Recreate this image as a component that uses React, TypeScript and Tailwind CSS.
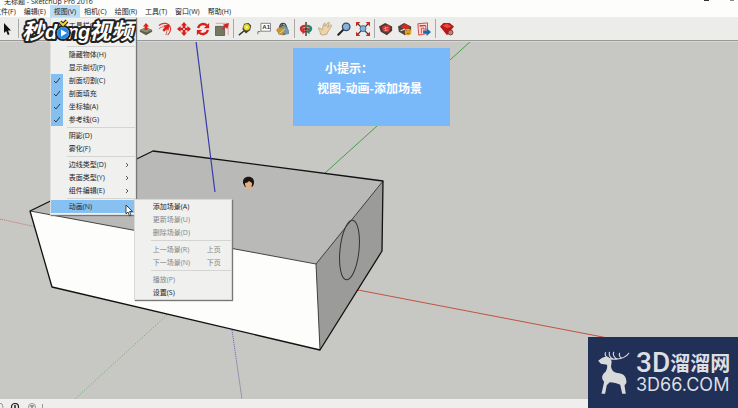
import React from 'react';
import clsx from 'clsx';

type MenuEntry = {
  label: string;
  checked?: boolean;
  arrow?: boolean;
  disabled?: boolean;
  hint?: string;
};

const menus = ['文件(F)', '编辑(E)', '视图(V)', '相机(C)', '绘图(R)', '工具(T)', '窗口(W)', '帮助(H)'];

const animationMenu: MenuEntry[][] = [
  [{ label: '添加场景(A)' }, { label: '更新场景(U)', disabled: true }, { label: '删除场景(D)', disabled: true }],
  [
    { label: '上一场景(R)', disabled: true, hint: '上页' },
    { label: '下一场景(N)', disabled: true, hint: '下页' },
  ],
  [{ label: '播放(P)', disabled: true }, { label: '设置(S)' }],
];

const viewMenu: MenuEntry[][] = [
  [
    { label: '隐藏物体(H)' },
    { label: '显示剖切(P)' },
    { label: '剖面切割(C)', checked: true },
    { label: '剖面填充', checked: true },
    { label: '坐标轴(A)', checked: true },
    { label: '参考线(G)', checked: true },
  ],
  [{ label: '阴影(D)' }, { label: '雾化(F)' }],
  [
    { label: '边线类型(D)', arrow: true },
    { label: '表面类型(Y)', arrow: true },
    { label: '组件编辑(E)', arrow: true },
  ],
];

const Svg = ({ children }: { children: React.ReactNode }) => (
  <svg viewBox="0 0 16 16" className="h-3.5 w-3.5" fill="none" aria-hidden="true">
    {children}
  </svg>
);

const toolGroups: { name: string; icon: React.ReactNode }[][] = [
  [
    {
      name: '推/拉',
      icon: (
        <Svg>
          <path d="M1 9 8 6l7 3v2l-7 4-7-4z" fill="#5f5e49" />
          <path d="m1 9 7-3 7 3-7 3z" fill="#8d8b70" />
          <path d="M6.500 9V5H4.500L8 1l3.500 4h-2v4z" fill="#e0201b" />
        </Svg>
      ),
    },
    {
      name: '路径跟随',
      icon: (
        <Svg>
          <path d="M1 4c5-4 11-3 13 2 1 3 0 6-3 9" stroke="#e5322c" strokeWidth="1.300" />
          <path d="M1 8c3-3 6-3 8-1 2 2 1 5 0 8" stroke="#a55a55" />
          <path d="m5 9 3-3-2-2 7-1-1 7-2-2-3 3z" fill="#dc1e1a" />
        </Svg>
      ),
    },
    {
      name: '移动',
      icon: (
        <Svg>
          <path d="m8 0 3.500 4H9.500v2.500H12V4.500L16 8l-4 3.500v-2H9.500V12h2L8 16l-3.500-4h2V9.500H4v2L0 8l4-3.500v2h2.500V4h-2z" fill="#d91f1b" />
          <path d="M7 7h2v2H7z" fill="#f5d5d3" />
        </Svg>
      ),
    },
    {
      name: '旋转',
      icon: (
        <Svg>
          <path d="M2.500 7c1-5 7-6 10-3M13.500 9c-1 5-7 6-10 3" stroke="#dc1f1b" strokeWidth="2.600" />
          <path d="M15 1v6H9zM1 15V9h6z" fill="#dc1f1b" />
        </Svg>
      ),
    },
    {
      name: '缩放',
      icon: (
        <Svg>
          <path d="M1 1.500h14V15" stroke="#e99590" />
          <path d="M.5 5h10.500v10.500H.5z" fill="#77765f" stroke="#5b5a48" />
          <path d="m8 8 3-3-2-2 7-2-2 7-2-2-3 3z" fill="#dc1f1b" />
        </Svg>
      ),
    },
  ],
  [
    {
      name: '卷尺工具',
      icon: (
        <Svg>
          <path d="m1 15 6-5" stroke="#333" strokeWidth="1.600" />
          <path d="M5 8 7 2l5-1 3 3-1 5-5 4z" fill="#3d3c25" />
          <circle cx="10" cy="6" r="3.600" fill="#e5d928" />
          <circle cx="10" cy="6" r="1.300" fill="#fbf7b3" />
        </Svg>
      ),
    },
    {
      name: '文字',
      icon: (
        <Svg>
          <path d="M4.500 1.500h11v9h-11z" fill="#fff" stroke="#777" />
          <path d="M4 11H1v3" stroke="#666" />
          <text x="6" y="8.500" fontSize="7" fontFamily="Liberation Sans" fontWeight="700" fill="#333">
            A1
          </text>
        </Svg>
      ),
    },
    {
      name: '材质',
      icon: (
        <Svg>
          <path d="m1 9 6-7 6 4 2 7-7 2-5-1z" fill="#55574e" />
          <path d="m6 5 5-1 4 6-1 4-4 0z" fill="#729aad" />
          <path d="M0 10c2-5 6-5 10-1l-2 6-5-1-1-3z" fill="#c49439" />
          <path d="M4 6c1-6 7-6 8 0" stroke="#41443c" strokeWidth="1.300" />
          <path d="m4 13 6-5" stroke="#eee3ac" />
        </Svg>
      ),
    },
  ],
  [
    {
      name: '环绕观察',
      icon: (
        <Svg>
          <path d="M7 3C0 3-1 9 4 12v2l4-3-4-4v2C3 8 4 6 7 6z" fill="#cf2c2b" />
          <path d="M9 3c7 0 8 6 3 9v2l-4-3 4-4v2c1-1 0-3-3-3z" fill="#30836a" />
          <path d="M4 8h8" stroke="#b7302b" strokeWidth="2" />
          <path d="M8 0v16" stroke="#263d31" strokeWidth="1.600" />
        </Svg>
      ),
    },
    {
      name: '平移',
      icon: (
        <Svg>
          <path
            d="M3 14 2 10 0 7l2 0 3 2 1-6 2-2 0 4 4-5 1 1-2 5 4-3 1 1-4 6-2 4-5 1z"
            fill="#f0d3a7"
            stroke="#a58b69"
            strokeWidth="0.700"
          />
        </Svg>
      ),
    },
    {
      name: '缩放视图',
      icon: (
        <Svg>
          <path d="m1.500 14.500 5.500-5.500" stroke="#222" strokeWidth="2.400" strokeLinecap="round" />
          <circle cx="10.500" cy="5.500" r="4.300" fill="#86b3db" stroke="#384b5d" strokeWidth="1.500" />
        </Svg>
      ),
    },
    {
      name: '充满视窗',
      icon: (
        <Svg>
          <path d="m2 2 12 12M14 2 2 14" stroke="#4b3434" strokeWidth="1.300" />
          <path d="M0 0h5L0 5zM16 0v5l-5-5zM16 16h-5l5-5zM0 16v-5l5 5z" fill="#d3261f" />
          <circle cx="8" cy="7.500" r="3.400" fill="#86b3db" stroke="#46647c" />
        </Svg>
      ),
    },
  ],
  [
    {
      name: '获取模型',
      icon: (
        <Svg>
          <path d="m0 5 7-4 8 4 0 5-6 5-7-4z" fill="#473c36" />
          <path d="m3 5 8-2 2 4-2 5-6-1z" fill="#d52925" />
          <path d="m5 8 6-2M6 10l5-1M7 5l1 5" stroke="#f3b0a7" strokeWidth="0.800" />
        </Svg>
      ),
    },
    {
      name: '分享模型',
      icon: (
        <Svg>
          <path d="m0 5 7-4 8 4 0 5-7 5-7-4z" fill="#50443d" />
          <path d="m3 5 6-3 5 4-6 3z" fill="#d62925" />
          <path d="m3 10 5-2" stroke="#e9dedb" strokeWidth="1.500" />
          <circle cx="11.500" cy="11.500" r="3.800" fill="#e0a82d" />
          <path d="M9.500 10h1M12.500 10h1M10 13h3" stroke="#755414" />
        </Svg>
      ),
    },
    {
      name: '分享组件',
      icon: (
        <Svg>
          <path d="m1 2 11-1v12l-10 2z" fill="#f7dedb" stroke="#d83630" />
          <path d="m3 5 7-1v7M5 13V7l3 0v5M3 4h7" stroke="#d83630" />
          <path d="M7 10h4V7l5 4.500-5 4.500v-3H7z" fill="#176bb2" />
        </Svg>
      ),
    },
  ],
  [
    {
      name: '扩展程序库',
      icon: (
        <Svg>
          <path d="m0 5 4-4h7l5 4-8 10z" fill="#b81916" />
          <path d="m3 4 5-2 5 3-5 2z" fill="#eb4840" />
          <circle cx="12" cy="12" r="2.800" fill="#c5817c" stroke="#7d2724" />
        </Svg>
      ),
    },
  ],
];

function Separator() {
  return <div role="separator" className="ml-4 h-px bg-[#d4d4d3]" />;
}

function Chevron() {
  return (
    <svg viewBox="0 0 4 6" className="mr-1.5 h-1.5 w-1" fill="none" stroke="#333" strokeWidth="0.800">
      <path d="m1 1 2 2-2 2" />
    </svg>
  );
}

function MenuRow({ entry }: { entry: MenuEntry }) {
  return (
    <button
      type="button"
      role={entry.checked ? 'menuitemcheckbox' : 'menuitem'}
      aria-checked={entry.checked}
      disabled={entry.disabled}
      className={clsx('flex h-[13px] w-full items-center text-left', entry.disabled ? 'text-[#858585]' : 'text-[#222]')}
    >
      <span className={clsx('flex h-full w-3 shrink-0 items-center justify-center', entry.checked && 'bg-[#85bff0]')}>
        {entry.checked && (
          <svg viewBox="0 0 8 8" className="h-2 w-2" fill="none" stroke="#253f57">
            <path d="m1 4 2 2 4-5" />
          </svg>
        )}
      </span>
      <span className="ml-1.5 flex-1 whitespace-nowrap">{entry.label}</span>
      {entry.hint && <span className="mr-2.5">{entry.hint}</span>}
      {entry.arrow && <Chevron />}
    </button>
  );
}

function ViewMenu() {
  return (
    <div
      role="menu"
      className="absolute top-full left-0 w-[86px] border border-[#dededd] bg-[#f0f0ef] py-px shadow-[1px_1px_1px_#777]"
    >
      <MenuRow entry={{ label: '工具栏(T)...' }} />
      {/* room for the video logo */}
      <div className="h-[13px]" />
      <div className="py-px">
        <Separator />
      </div>
      {viewMenu.map((group, i) => (
        <React.Fragment key={i}>
          {group.map((entry) => (
            <MenuRow key={entry.label} entry={entry} />
          ))}
          <div className="py-px">
            <Separator />
          </div>
        </React.Fragment>
      ))}
      <div className="relative">
        <button
          type="button"
          role="menuitem"
          aria-expanded="true"
          className="flex h-[13px] w-full items-center bg-[#87c1f2] pl-[18px] text-left text-[#222]"
        >
          <span className="flex-1">动画(N)</span>
          <Chevron />
        </button>
        <AnimationMenu />
        <svg viewBox="0 0 8 13" className="absolute top-1 right-0.5 h-[13px] w-2">
          <path d="M1 1v9l2-2 1.500 4 1.500-.7L4.500 7.500h3z" fill="#fff" stroke="#222" strokeWidth="0.800" />
        </svg>
      </div>
    </div>
  );
}

function AnimationMenu() {
  return (
    <div
      role="menu"
      className="absolute -top-px left-full -ml-px w-[98px] border border-[#d8d8d7] bg-[#f0f0ef] shadow-[1px_1px_1px_#777]"
    >
      {animationMenu.map((group, i) => (
        <React.Fragment key={i}>
          {i > 0 && (
            <div className="pt-px pb-0.5">
              <Separator />
            </div>
          )}
          {group.map((entry) => (
            <MenuRow key={entry.label} entry={entry} />
          ))}
        </React.Fragment>
      ))}
    </div>
  );
}

function ToolDivider() {
  return (
    <div className="flex h-full w-1 justify-center py-0.5">
      <div className="w-px bg-[#a9a9a8]" />
    </div>
  );
}

function Toolbar() {
  return (
    <div role="toolbar" className="flex h-6 shrink-0 items-center border-b border-[#999998] bg-[#ececeb]">
      <button type="button" aria-label="选择" className="flex h-full w-4 items-center pl-[3px]">
        <svg viewBox="0 0 8 12" className="h-3 w-2">
          <path d="M1 0v10l2.200-2 1.600 4 1.700-.7L5 7.500h3z" fill="#111" />
        </svg>
      </button>
      <ToolDivider />
      <div className="w-[116px]" />
      {toolGroups.map((group, i) => (
        <React.Fragment key={i}>
          {i > 0 && <ToolDivider />}
          {group.map((tool) => (
            <button
              key={tool.name}
              type="button"
              aria-label={tool.name}
              className="flex h-full w-[19px] items-center justify-center"
            >
              {tool.icon}
            </button>
          ))}
        </React.Fragment>
      ))}
    </div>
  );
}

// 3D viewport: axes, box model and the figure's head
function Scene() {
  return (
    <svg
      viewBox="0 42 738 357"
      preserveAspectRatio="xMinYMin slice"
      className="absolute inset-0 h-full w-full"
      fill="none"
      aria-hidden="true"
    >
      <path d="M471 41 325 173" stroke="#43a047" />
      <path d="m358 290 380 73" stroke="#c0533f" />
      <path d="m0 219 36 8" stroke="#c47468" strokeDasharray="1 1" />
      <path d="m167 315-92 84" stroke="#63a866" strokeDasharray="1 2" />
      <path d="m232 330 10 69" stroke="#6464a0" strokeDasharray="1 1" />
      <path d="m30 211 123-60 230 30-67 83z" fill="#b9b9b8" />
      <path d="m30 211 286 53 4 86-268-63z" fill="#fdfdfc" />
      <path d="m316 264 67-83-1 70-62 99z" fill="#9b9b9a" />
      <path d="m30 211 286 53 67-83M316 264l4 86" stroke="#333" strokeWidth="0.900" />
      <path d="m30 211 123-60 230 30-1 70-62 99-268-63z" stroke="#111" strokeWidth="1.300" strokeLinejoin="round" />
      <ellipse cx="349.500" cy="250" rx="9.500" ry="30" transform="rotate(6 349.500 250)" stroke="#333" />
      <path d="m196 41 19 151" stroke="#3b3ba5" strokeWidth="1.200" />
      <path d="M243 183c-1-8 11-8 11-1 0 3-1 4-2 5h-7z" fill="#1b1411" />
      <path d="M245 183c2 0 3-1 4-2l3 2c0 4-1 6-3 6s-4-2-4-6z" fill="#e5ae83" />
    </svg>
  );
}

function VideoLogo() {
  return (
    <svg
      viewBox="0 0 116 28"
      className="pointer-events-none absolute top-[18px] left-5 z-30 h-7 w-[116px]"
      fontFamily="'Liberation Sans', 'Noto Sans CJK SC', sans-serif"
      fontStyle="italic"
      fontWeight="700"
    >
      <g fill="#fff" stroke="#222" strokeWidth="4" strokeLinejoin="round" paintOrder="stroke">
        <text x="2" y="21" fontSize="22">秒</text>
        <text x="25" y="21" fontSize="20">d</text>
        <text x="47" y="21" fontSize="20">n</text>
        <text x="58" y="21" fontSize="20">g</text>
        <text x="69" y="21" fontSize="22">视频</text>
        <circle cx="43" cy="15" r="6" />
      </g>
      <path d="m40 4 3 3 4-4" stroke="#222" strokeWidth="4" fill="none" />
      <path d="m40 4 3 3 4-4" stroke="#f4d62b" strokeWidth="2" fill="none" />
      <circle cx="43" cy="15" r="6" fill="#2588e8" />
      <path d="m41 11.500 6 3.500-6 3.500z" fill="#fff" />
    </svg>
  );
}

function SiteBadge() {
  return (
    <div className="absolute right-0 bottom-0 z-10 flex h-[71px] w-[150px] items-center gap-1.5 bg-[#203057] pl-2 text-[#dedfe1]">
      <svg viewBox="50 60 100 140" className="h-[46px] w-[34px] shrink-0" fill="none" aria-hidden="true">
        <path
          d="M55 93 66 84l12-4 14 6 4 9-2 15c2 12 8 18 20 20 16 2 24 8 26 20l1 10-6 8 4 25h-11l-6-27c-10-5-20-7-32-8l-9 9-5 26H65l8-36c-9-10-8-22 4-30 5-8 6-14 5-22l-19-3z"
          fill="#d8d9da"
        />
        <path
          d="M90 87c20 2 46 2 58-17M86 84c-8-3-12-9-9-16M99 87c-9-5-12-12-10-20M112 88c-9-6-13-13-10-21M127 85c-6-3-9-9-7-15"
          stroke="#d8d9da"
          strokeWidth="3.500"
          strokeLinecap="round"
        />
      </svg>
      <div className="whitespace-nowrap">
        <div className="flex items-center leading-6">
          <span className="font-[Roboto] text-[28px] font-medium">3D</span>
          <span className="font-['Noto_Sans_CJK_SC',sans-serif] text-[20px] font-bold">溜溜网</span>
        </div>
        <div className="font-[Inter] text-[18px] leading-5">3D66.COM</div>
      </div>
    </div>
  );
}

export default function App() {
  return (
    <div className="relative flex h-screen flex-col overflow-hidden bg-[#c7c8c3] font-['Open_Sans','Noto_Sans_CJK_SC',sans-serif] text-[7px] leading-none">
      {/* Title bar */}
      <header className="flex h-[5px] shrink-0 items-end justify-between overflow-hidden bg-[#fdfdfc] pr-1 pl-1 text-[#222]">
        <span>无标题 - SketchUp Pro 2016</span>
        <div className="flex h-full w-[30px] items-start justify-between">
          <span className="h-px w-[5px] bg-[#333]" />
          <span className="h-px w-1 bg-[#888]" />
        </div>
      </header>

      {/* Menu bar */}
      <nav className="relative z-20 -ml-2.5 flex h-3 shrink-0 bg-[#fdfdfc] text-[#222]">
        {menus.map((label) => (
          <div key={label} className="relative">
            <button
              type="button"
              className={clsx('h-full px-1 whitespace-nowrap', label === '视图(V)' && 'bg-[#b9dcf7]')}
            >
              {label}
            </button>
            {label === '视图(V)' && <ViewMenu />}
          </div>
        ))}
      </nav>

      <Toolbar />

      <main className="relative flex-1 border-t border-[#d5d5d2]">
        <Scene />
        <div className="absolute top-1.5 left-[293px] h-[78px] w-[157px] bg-[#79b8f9] pt-2.5 pl-6 font-['Noto_Sans_CJK_SC',sans-serif] text-[12px] leading-5 font-bold whitespace-nowrap text-white">
          <p className="pl-2">小提示：</p>
          <p>视图-动画-添加场景</p>
        </div>
      </main>

      {/* Status bar */}
      <footer className="flex h-[9px] shrink-0 items-start overflow-hidden bg-[#eeeeed] pt-1">
        <svg viewBox="0 0 44 10" className="h-2.5 w-11 shrink-0" fill="none">
          <circle cx="-1" cy="4" r="4" stroke="#999" />
          <circle cx="15" cy="4" r="3.500" stroke="#222" strokeWidth="1.200" />
          <path d="M15 2v5" stroke="#222" strokeWidth="1.500" />
          <circle cx="32" cy="4" r="3.500" stroke="#999" />
          <path d="M30 3h4M32 3v4" stroke="#888" strokeWidth="1.500" />
          <path d="M42.500 1v9" stroke="#999" />
        </svg>
      </footer>

      <VideoLogo />
      <SiteBadge />
    </div>
  );
}
